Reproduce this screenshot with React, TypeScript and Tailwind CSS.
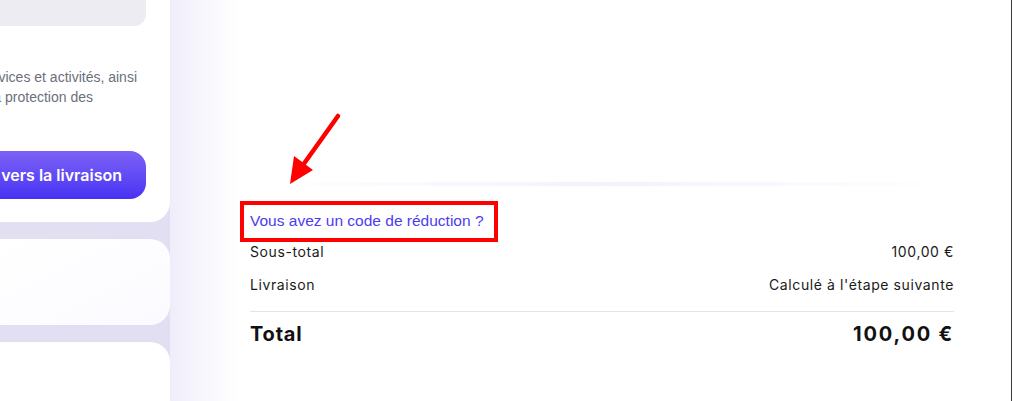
import React from 'react';

// Left column: cropped checkout cards on a lavender backdrop
const LeftColumn: React.FC = () => (
  <div className="w-[170px] shrink-0 flex flex-col gap-[17px] bg-[#e2dff2] overflow-hidden">
    <div className="bg-white rounded-br-[20px] flex flex-col pr-[24px] pb-[23px]">
      <div className="h-[26px] bg-[#ececf2] rounded-br-[12px]" />
      <div className="mt-[41px] text-[14px] leading-[20px] text-[#6b6f7b] font-['Liberation_Sans',sans-serif]">
        <div className="w-[137px] flex justify-end overflow-hidden whitespace-nowrap">
          <span>nos services et activités, ainsi</span>
        </div>
        <div className="w-[93px] flex justify-end overflow-hidden whitespace-nowrap">
          <span>que la protection des</span>
        </div>
      </div>
      <button className="mt-[44px] h-[48px] rounded-r-[16px] bg-gradient-to-b from-[#7d60f6] to-[#4930f3] flex items-center justify-end pr-[24px] text-white text-[16px] font-semibold font-['Inter',sans-serif] whitespace-nowrap overflow-hidden">
        Continuer vers la livraison
      </button>
    </div>
    <div className="h-[86px] bg-gradient-to-br from-white to-[#fbfaff] rounded-r-[20px]" />
    <div className="flex-1 bg-white rounded-tr-[20px]" />
  </div>
);

const Row: React.FC<{ label: string; value: string }> = ({ label, value }) => (
  <div className="flex items-center justify-between h-[33px] text-[14px] tracking-[0.6px] text-[#1a1a1a]">
    <span>{label}</span>
    <span>{value}</span>
  </div>
);

// Red annotation arrow pointing at the discount link
const Arrow = () => (
  <svg className="absolute left-[280px] top-[105px]" width="70" height="90" viewBox="280 105 70 90">
    <line x1="338" y1="116" x2="303" y2="165" stroke="#ff0000" strokeWidth="4.5" strokeLinecap="round" />
    <polygon points="290,184 294,156 313,170" fill="#ff0000" />
  </svg>
);

const App: React.FC = () => {
  return (
    <div className="relative w-[1013px] h-[401px] flex bg-white overflow-hidden">
      <LeftColumn />
      <div className="w-[70px] shrink-0 bg-gradient-to-r from-[#efedfa] via-[#f8f7fd] to-white" />
      <div className="flex-1 flex flex-col">
        <div className="h-[182px] shrink-0" />
        <div className="h-[4px] shrink-0 ml-[20px] mr-[60px] bg-gradient-to-r from-transparent via-[#f3f1fc] to-transparent" />
        <div className="ml-[10px] mr-[57px] flex flex-col font-['Inter',sans-serif] pb-[20px]">
          <div className="relative mt-[25px] h-[20px] flex items-center">
            <span className="text-[15.5px] text-[#4b3cf0] font-['Liberation_Sans',sans-serif] whitespace-nowrap">
              Vous avez un code de réduction ?
            </span>
            <div className="absolute -left-[10px] -top-[10px] w-[258px] h-[41px] border-4 border-[#ff0000]" />
          </div>
          <div className="mt-[4px]">
            <Row label="Sous-total" value="100,00 €" />
            <Row label="Livraison" value="Calculé à l'étape suivante" />
          </div>
          <div className="mt-[10px] h-px bg-[#e4e4e4]" />
          <div className="flex items-center justify-between h-[43px] text-[20px] font-bold text-[#111]">
            <span className="tracking-[0.8px]">Total</span>
            <span className="tracking-[1.8px]">100,00 €</span>
          </div>
        </div>
      </div>
      <div className="w-px bg-[#3a3a3a] shrink-0" />
      <div className="w-px bg-white shrink-0" />
      <Arrow />
    </div>
  );
};

export default App;
